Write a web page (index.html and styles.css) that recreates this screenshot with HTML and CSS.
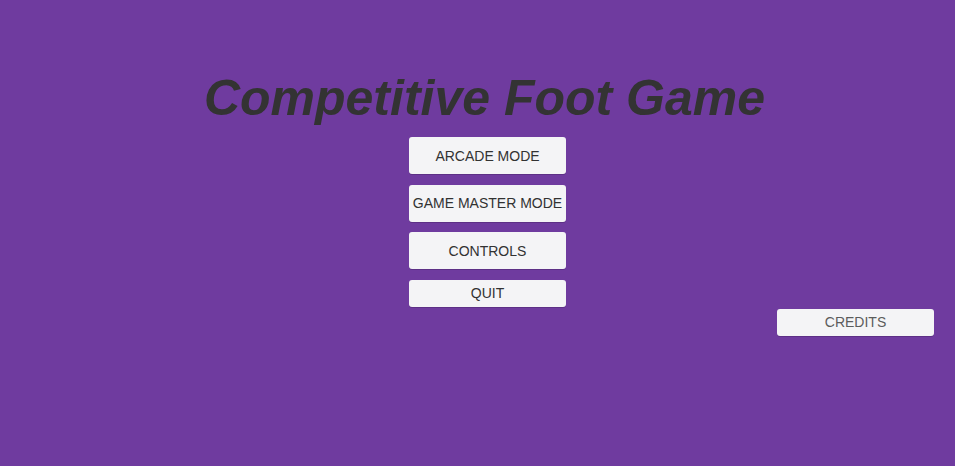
FILE: index.html
```html
<!DOCTYPE html>
<html>
<head>
<meta charset="utf-8">
<link rel="stylesheet" href="styles.css">
</head>
<body>
<div class="screen">
  <div class="menu">
    <h1 class="title">Competitive Foot Game</h1>
    <div class="buttons">
      <button class="btn tall">ARCADE MODE</button>
      <button class="btn tall">GAME MASTER MODE</button>
      <button class="btn tall">CONTROLS</button>
      <button class="btn short">QUIT</button>
    </div>
  </div>
  <div class="footer">
    <button class="btn short credits">CREDITS</button>
  </div>
</div>
</body>
</html>
```
FILE: styles.css
```css
html, body {
  margin: 0;
  padding: 0;
  height: 100%;
}
body {
  background: #6f3b9f;
  font-family: "Liberation Sans", Arial, sans-serif;
  overflow: hidden;
}
.screen {
  display: flex;
  flex-direction: column;
  height: 100%;
}
.menu {
  display: flex;
  flex-direction: column;
  align-items: center;
  padding-left: 20px;
  padding-top: 68px;
}
.title {
  margin: 0 0 0 -6px;
  font-size: 50px;
  line-height: 60px;
  font-weight: bold;
  font-style: italic;
  color: #333333;
}
.buttons {
  display: flex;
  flex-direction: column;
  gap: 10.5px;
  margin-top: 9px;
}
.btn {
  width: 157px;
  border: none;
  border-radius: 3px;
  background: #f4f4f6;
  box-shadow: 0 1px 0 rgba(60, 30, 90, 0.35);
  font-family: "Liberation Sans", Arial, sans-serif;
  font-size: 14px;
  color: #323232;
  padding: 0;
  margin: 0;
}
.tall {
  height: 37px;
}
.short {
  height: 27px;
}
.footer {
  display: flex;
  justify-content: flex-end;
  padding-right: 21px;
  margin-top: 2px;
}
.credits {
  color: #5c5c5c;
}
```
